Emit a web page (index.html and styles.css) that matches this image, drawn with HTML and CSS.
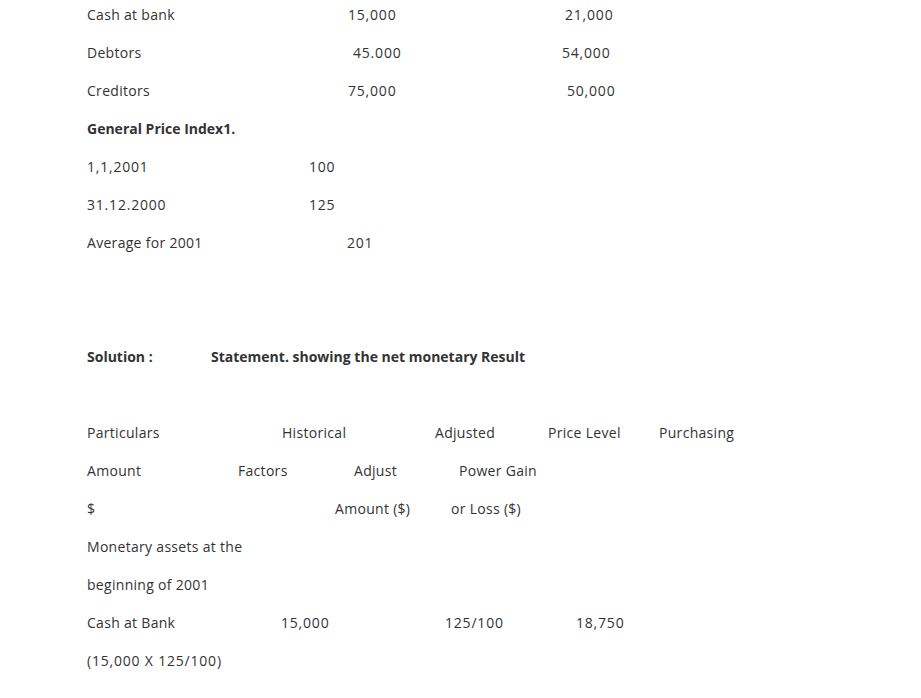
FILE: index.html
```html
<!DOCTYPE html>
<html>
<head>
<meta charset="utf-8">
<link rel="stylesheet" href="styles.css">
</head>
<body>
<div class="doc">
  <div class="row r1"><span>Cash at bank</span><span class="num">15,000</span><span class="num">21,000</span></div>
  <div class="row r2"><span>Debtors</span><span class="num">45.000</span><span class="num">54,000</span></div>
  <div class="row r3"><span>Creditors</span><span class="num">75,000</span><span class="num">50,000</span></div>
  <div class="row"><strong>General Price Index1.</strong></div>
  <div class="row r5"><span class="num">1,1,2001</span><span class="num">100</span></div>
  <div class="row r5"><span class="num">31.12.2000</span><span class="num">125</span></div>
  <div class="row r7"><span>Average for 2001</span><span class="num">201</span></div>
  <div class="row empty"></div>
  <div class="row empty"></div>
  <div class="row sol"><strong>Solution :</strong><strong>Statement. showing the net monetary Result</strong></div>
  <div class="row empty"></div>
  <div class="row h1"><span>Particulars</span><span>Historical</span><span>Adjusted</span><span>Price Level</span><span>Purchasing</span></div>
  <div class="row h2"><span>Amount</span><span>Factors</span><span>Adjust</span><span>Power Gain</span></div>
  <div class="row h3"><span>$</span><span>Amount ($)</span><span>or Loss ($)</span></div>
  <div class="row"><span>Monetary assets at the</span></div>
  <div class="row"><span>beginning of 2001</span></div>
  <div class="row cb"><span>Cash at Bank</span><span class="num">15,000</span><span class="num">125/100</span><span class="num">18,750</span></div>
  <div class="row"><span class="num">(15,000 X 125/100)</span></div>
</div>
</body>
</html>
```
FILE: styles.css
```css
html, body {
  margin: 0;
  padding: 0;
  background: #ffffff;
}
body {
  font-family: "Open Sans", "DejaVu Sans", sans-serif;
  font-size: 14px;
  color: #333333;
  letter-spacing: 0.3px;
}
.doc {
  padding: 4px 0 0 87px;
}
.row {
  display: grid;
  grid-auto-flow: column;
  justify-content: start;
  height: 22px;
  line-height: 22px;
  margin: 0 0 16px;
  white-space: nowrap;
}
.row strong {
  font-weight: 700;
  letter-spacing: 0;
}
.num {
  letter-spacing: 0.8px;
}
.r1 { grid-template-columns: 261px 217px auto; }
.r2 { grid-template-columns: 266px 209px auto; }
.r3 { grid-template-columns: 261px 219px auto; }
.r5 { grid-template-columns: 222px auto; }
.r7 { grid-template-columns: 260px auto; }
.sol { grid-template-columns: 124px auto; }
.h1 { grid-template-columns: 195px 153px 113px 111px auto; }
.h2 { grid-template-columns: 151px 116px 105px auto; }
.h3 { grid-template-columns: 248px 116px auto; }
.cb { grid-template-columns: 194px 164px 131px auto; }
```
